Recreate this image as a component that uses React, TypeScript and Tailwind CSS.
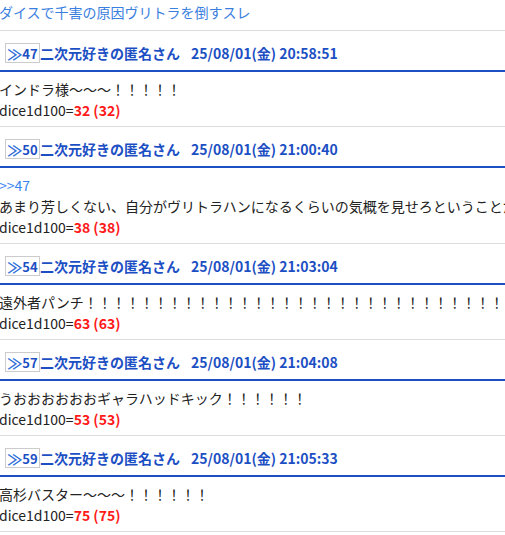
const posts = [
  { no: 47, time: "20:58:51", lines: ["インドラ様〜〜〜！！！！！"], dice: 32 },
  {
    no: 50,
    time: "21:00:40",
    anchor: ">>47",
    lines: ["あまり芳しくない、自分がヴリトラハンになるくらいの気概を見せろということだ"],
    dice: 38,
  },
  {
    no: 54,
    time: "21:03:04",
    lines: ["遠外者パンチ！！！！！！！！！！！！！！！！！！！！！！！！！！！！！！！！"],
    dice: 63,
  },
  { no: 57, time: "21:04:08", lines: ["うおおおおおおギャラハッドキック！！！！！！"], dice: 53 },
  { no: 59, time: "21:05:33", lines: ["高杉バスター〜〜〜！！！！！！"], dice: 75 },
];

export default function App() {
  return (
    <div
      className="w-[505px] h-[535px] overflow-hidden bg-white text-[14px] leading-[21px] text-[#333]"
      style={{ fontFamily: '"Noto Sans CJK JP", "Noto Sans", sans-serif' }}
    >
      <div className="pt-[2px] pb-[7px] text-[#3a7ee0] whitespace-nowrap -ml-[1px]">
        ダイスで千害の原因ヴリトラを倒すスレ
      </div>
      {posts.map((p) => (
        <div key={p.no} className="border-t border-[#ddd] pb-[5px]">
          <div className="flex items-center h-[41px] pt-[12px] pb-[7px] border-b-2 border-[#1c4fc4] pl-[5px] whitespace-nowrap leading-[20px]">
            <span className="border border-[#ccc] h-[20px] w-[35px] flex items-center justify-center text-[13px] font-bold text-[#1c4fc4] leading-none">
              <span className="text-[#2f6fd8] font-bold text-[15px]">≫</span>
              {p.no}
            </span>
            <span className="font-bold text-[#1c4fc4] text-[14px]">二次元好きの匿名さん</span>
            <span className="font-bold text-[#1c4fc4] text-[14px] ml-[11px]">25/08/01(金) {p.time}</span>
          </div>
          <div className="pt-[7px] -ml-[1px] whitespace-nowrap overflow-hidden text-[#222]">
            {p.anchor && <div className="text-[#3a86f0]">{p.anchor}</div>}
            {p.lines.map((l, i) => (
              <div key={i}>{l}</div>
            ))}
            <div>
              dice1d100=
              <span className="font-bold text-[#ff1a1a]">
                {p.dice} ({p.dice})
              </span>
            </div>
          </div>
        </div>
      ))}
      <div className="border-t border-[#ddd]" />
    </div>
  );
}
